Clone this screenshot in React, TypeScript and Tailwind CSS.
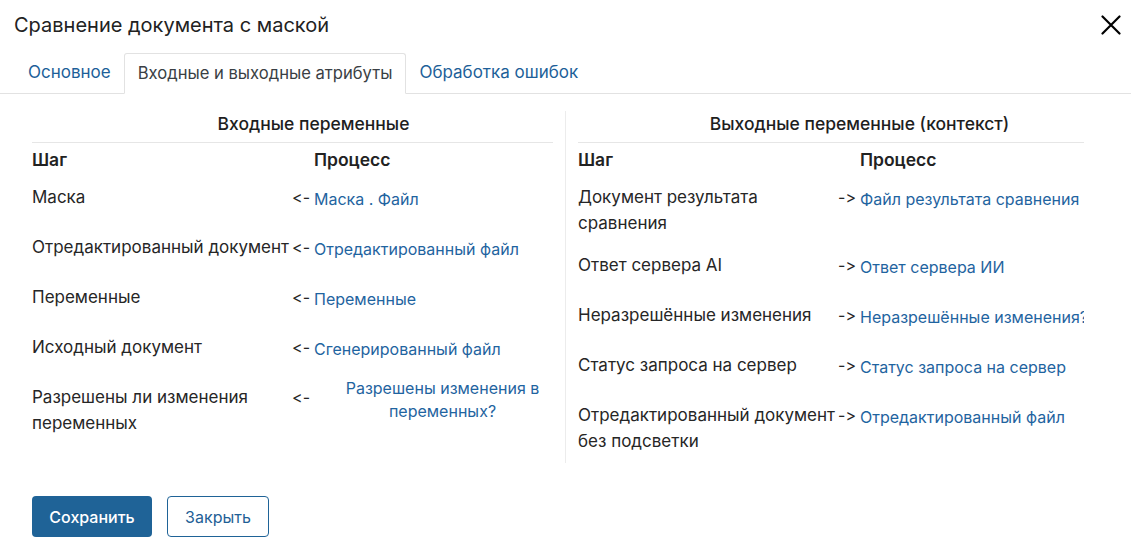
import React from "react";

type Row = {
  step: string;
  value: string;
  wrapValue?: boolean;
};

const inputs: Row[] = [
  { step: "Маска", value: "Маска . Файл" },
  { step: "Отредактированный документ", value: "Отредактированный файл" },
  { step: "Переменные", value: "Переменные" },
  { step: "Исходный документ", value: "Сгенерированный файл" },
  { step: "Разрешены ли изменения переменных", value: "Разрешены изменения в переменных?", wrapValue: true },
];

const outputs: Row[] = [
  { step: "Документ результата сравнения", value: "Файл результата сравнения" },
  { step: "Ответ сервера AI", value: "Ответ сервера ИИ" },
  { step: "Неразрешённые изменения", value: "Неразрешённые изменения?" },
  { step: "Статус запроса на сервер", value: "Статус запроса на сервер" },
  { step: "Отредактированный документ без подсветки", value: "Отредактированный файл" },
];

function VarTable({ title, rows, arrow }: { title: string; rows: Row[]; arrow: string }) {
  return (
    <div className="flex flex-col">
      {/* title is centred over the full 563px area, the rule only over the table */}
      <div className="w-[563px] h-[31px] pb-[5px] text-center text-[17.5px] leading-[26px] font-medium text-[#1e1e1e] whitespace-nowrap">
        {title}
      </div>
      <div className="h-px bg-[#e6e6e6]" />
      <div className="grid grid-cols-[259px_23px_1fr] h-[34px] items-center text-[17.5px] font-semibold text-[#222]">
        <span>Шаг</span>
        <span />
        <span>Процесс</span>
      </div>
      {rows.map((r) => (
        <div key={r.step} className="grid grid-cols-[259px_23px_1fr] min-h-[50px] pt-[7px] pb-[9px]">
          <span className="text-[17px] leading-[26px] text-[#262626]">{r.step}</span>
          <span className="text-[16px] leading-[26px] text-[#262626] text-right pr-[4px] whitespace-nowrap [font-feature-settings:'calt'_0,'liga'_0]">
            {arrow}
          </span>
          {r.wrapValue ? (
            <span className="-mt-[7px] pl-[18px] text-center text-[16px] leading-[23px] text-[#1f64a0]">{r.value}</span>
          ) : (
            <span className="pt-[2px] text-[16px] leading-[26px] text-[#1f64a0] whitespace-nowrap">{r.value}</span>
          )}
        </div>
      ))}
    </div>
  );
}

export default function App() {
  return (
    <div className="w-[1131px] h-[543px] bg-white overflow-hidden font-['Inter',sans-serif]">
      {/* Header */}
      <div className="flex items-center justify-between h-[53px] pl-[14px] pr-[10px] pb-[4px]">
        <span className="text-[20px] text-[#222]">Сравнение документа с маской</span>
        <svg width="20" height="20" viewBox="0 0 20 20" className="text-black">
          <path d="M1.5 1.5 L18.5 18.5 M18.5 1.5 L1.5 18.5" stroke="currentColor" strokeWidth="2.2" strokeLinecap="round" />
        </svg>
      </div>

      {/* Tabs */}
      <div className="flex border-b border-[#e2e2e2] pl-[15px]">
        <div className="h-[40px] px-[13px] flex items-center text-[17px] text-[#1d5f99] -mb-px">Основное</div>
        <div className="h-[41px] px-[13px] flex items-center text-[16.6px] text-[#3a3f44] bg-white border border-[#e2e2e2] border-b-white rounded-t-[3px] -mb-px">
          Входные и выходные атрибуты
        </div>
        <div className="h-[40px] px-[13px] flex items-center text-[17px] text-[#1d5f99] -mb-px">Обработка ошибок</div>
      </div>

      {/* Body */}
      <div className="flex pl-[32px] pt-[17px]">
        <div className="w-[521px]">
          <VarTable title="Входные переменные" rows={inputs} arrow="<-" />
        </div>
        <div className="mx-[12px] w-px bg-[#ececec] h-[352px]" />
        <div className="w-[506px] overflow-hidden">
          <VarTable title="Выходные переменные (контекст)" rows={outputs} arrow="->" />
        </div>
      </div>

      {/* Footer */}
      <div className="flex gap-[15px] pl-[32px] pt-[33px]">
        <button className="w-[120px] h-[41px] rounded-[4px] bg-[#1f6397] text-white text-[16px] font-medium">Сохранить</button>
        <button className="w-[102px] h-[41px] rounded-[4px] border border-[#1f6397] bg-white text-[#1f5f96] text-[16px]">Закрыть</button>
      </div>
    </div>
  );
}
